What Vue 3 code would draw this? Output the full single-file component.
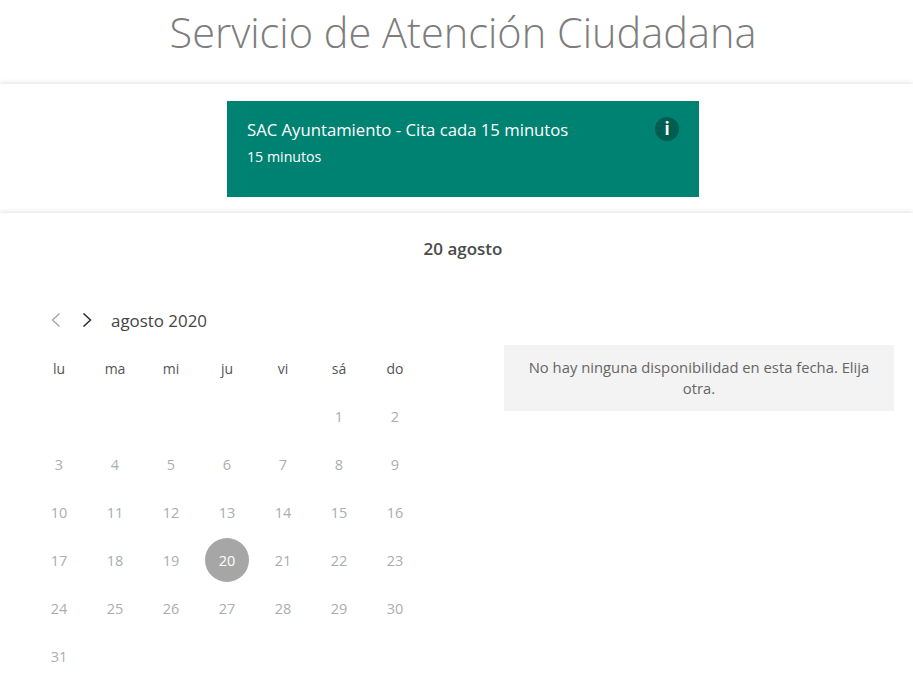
<template>
  <div class="page">
    <h1 class="title">Servicio de Atención Ciudadana</h1>
    <section class="service-band">
      <div class="service-card">
        <div class="service-text">
          <div class="service-name">SAC Ayuntamiento - Cita cada 15 minutos</div>
          <div class="service-time">15 minutos</div>
        </div>
        <span class="info-badge">i</span>
      </div>
    </section>
    <div class="schedule">
      <div class="selected-date">20 agosto</div>
      <div class="booking">
        <div class="calendar">
          <div class="cal-nav">
            <svg class="chevron prev" viewBox="0 0 10 16" width="10" height="16">
              <path d="M8.5 1.5 1.5 8l7 6.5" fill="none" stroke="#a9a9a9" stroke-width="1.5" />
            </svg>
            <svg class="chevron next" viewBox="0 0 10 16" width="10" height="16">
              <path d="M1.5 1.5 8.5 8l-7 6.5" fill="none" stroke="#2b2b2b" stroke-width="1.5" />
            </svg>
            <span class="month">agosto 2020</span>
          </div>
          <div class="cal-grid">
            <div v-for="d in weekdays" :key="d" class="weekday">{{ d }}</div>
            <div v-for="n in 5" :key="'e' + n" class="day"></div>
            <div v-for="n in 31" :key="n" class="day" :class="{ selected: n === 20 }">
              <span>{{ n }}</span>
            </div>
          </div>
        </div>
        <div class="notice">No hay ninguna disponibilidad en esta fecha. Elija otra.</div>
      </div>
    </div>
  </div>
</template>

<script setup>
const weekdays = ['lu', 'ma', 'mi', 'ju', 'vi', 'sá', 'do']
</script>

<style>
html, body { background: #fff; }
</style>

<style scoped>
.page {
  font-family: "Open Sans", "Noto Sans", "Liberation Sans", sans-serif;
  color: #444;
  height: 688px;
  overflow: hidden;
}
.title {
  margin: 0;
  height: 84px;
  padding: 5px 0 0 13px;
  box-sizing: border-box;
  text-align: center;
  font-size: 41.5px;
  line-height: 54px;
  font-weight: 300;
  color: #7d7d7d;
}
.service-band {
  height: 129px;
  box-sizing: border-box;
  padding: 17px 0 0 13px;
  background: #fff;
  box-shadow: 0 -1px 5px rgba(0, 0, 0, 0.12);
  display: flex;
  justify-content: center;
}
.service-card {
  width: 472px;
  height: 96px;
  box-sizing: border-box;
  padding: 16px 20px;
  background: #008272;
  color: #fff;
  display: flex;
  justify-content: space-between;
}
.service-name {
  font-size: 16.7px;
  line-height: 26px;
}
.service-time {
  font-size: 14.2px;
  line-height: 26px;
  margin-top: 1px;
}
.info-badge {
  width: 24px;
  height: 24px;
  border-radius: 50%;
  background: #005e50;
  font-size: 17px;
  font-weight: 700;
  line-height: 24px;
  text-align: center;
}
.schedule {
  background: #fff;
  box-shadow: 0 -1px 5px rgba(0, 0, 0, 0.12);
  height: 475px;
}
.selected-date {
  padding: 24px 0 0 13px;
  text-align: center;
  font-size: 17px;
  line-height: 24px;
  font-weight: 600;
  color: #4a4a4a;
}
.booking {
  display: flex;
  margin-top: 47px;
  padding-left: 31px;
}
.calendar {
  width: 392px;
}
.cal-nav {
  display: flex;
  align-items: center;
  height: 24px;
  padding-left: 20px;
}
.chevron.next {
  margin-left: 21px;
}
.month {
  margin-left: 19px;
  font-size: 16.9px;
  color: #444;
}
.cal-grid {
  display: grid;
  grid-template-columns: repeat(7, 56px);
  grid-auto-rows: 48px;
  margin-top: 12px;
}
.weekday {
  display: flex;
  align-items: center;
  justify-content: center;
  font-size: 14px;
  color: #555;
}
.day {
  display: flex;
  align-items: center;
  justify-content: center;
  font-size: 14.5px;
  color: #abaeb3;
}
.day.selected span {
  width: 44px;
  height: 44px;
  border-radius: 50%;
  background: #a6a6a6;
  color: #fff;
  display: flex;
  align-items: center;
  justify-content: center;
}
.notice {
  width: 390px;
  height: 66px;
  box-sizing: border-box;
  margin-top: 37px;
  margin-left: 81px;
  padding: 12px 16px;
  background: #f3f3f3;
  color: #666;
  font-size: 14.8px;
  line-height: 21px;
  text-align: center;
}
</style>
